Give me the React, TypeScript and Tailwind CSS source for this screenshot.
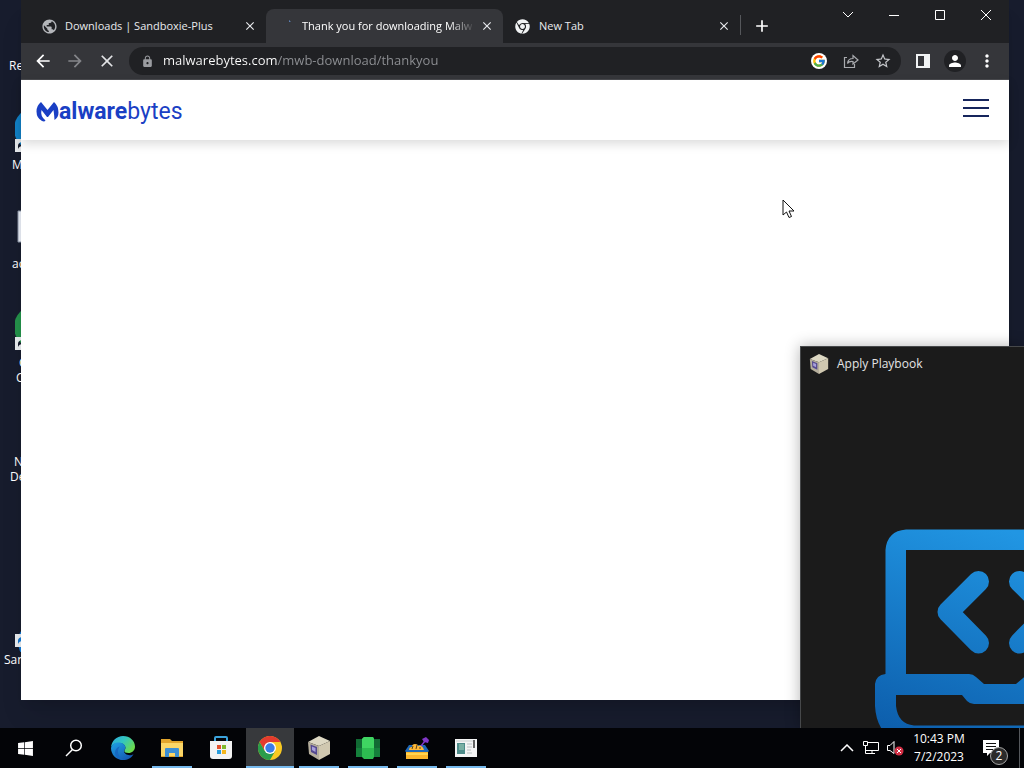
import type { ReactNode } from "react";
import { FaChrome, FaWindows } from "react-icons/fa";
import { FcGoogle } from "react-icons/fc";
import {
  MdAdd,
  MdArrowBack,
  MdArrowForward,
  MdClose,
  MdLock,
  MdMoreVert,
  MdPerson,
  MdPublic,
  MdStarBorder,
} from "react-icons/md";

function Shortcut() {
  return <path d="M0 30h13v13H0z M3 40v-3q0-4 5-4v-2l4 4-4 4v-2q-4 0-5 3z" fill="#e8ebee" fillRule="evenodd" />;
}

const desktopIcons: { id: string; lines: { text: string; inset: string }[]; art?: ReactNode }[] = [
  { id: "recycle", lines: [{ text: "Re", inset: "pl-[9px]" }] },
  {
    id: "edge",
    lines: [{ text: "M", inset: "pl-3" }],
    art: (
      <>
        <circle cx="21" cy="20" r="22" fill="#1283c9" />
        <Shortcut />
      </>
    ),
  },
  {
    id: "file",
    lines: [{ text: "ac", inset: "pl-3" }],
    art: <path d="M3 3h20v31H3z" fill="#e6eaf2" stroke="#8a93a5" />,
  },
  {
    id: "chrome",
    lines: [
      { text: "G", inset: "pl-[19px]" },
      { text: "C", inset: "pl-4" },
    ],
    art: (
      <>
        <circle cx="21" cy="20" r="22" fill="#24914a" />
        <Shortcut />
      </>
    ),
  },
  {
    id: "folder",
    lines: [
      { text: "N", inset: "pl-3.5" },
      { text: "De", inset: "pl-2.5" },
    ],
  },
  { id: "blank", lines: [] },
  {
    id: "sandboxie",
    lines: [{ text: "San", inset: "pl-1" }],
    art: (
      <>
        <circle cx="25" cy="38" r="22" fill="#1278d4" />
        <Shortcut />
      </>
    ),
  },
];

function Cube({ size }: { size: number }) {
  return (
    <svg width={size} height={size} viewBox="0 0 24 24">
      <path d="M12 0 23 5 12 10 1 6z" fill="#ddd8c3" />
      <path d="M1 6 12 10V24L2 18z" fill="#b5ae9c" />
      <path d="M12 10 23 5V18L12 24z" fill="#d0c8b0" />
      <path d="M3.500 8.500 10 11v8l-6-3z" fill="#54498f" />
      <path d="M5 10.500 8.500 12v4L5 14z" fill="#a8a0dc" />
    </svg>
  );
}

function EdgeLogo() {
  return (
    <svg width="24" height="24" viewBox="0 0 24 24">
      <defs>
        <linearGradient id="edgeTop" x1="0" y1="0" x2="1" y2="0.600">
          <stop offset="0" stopColor="#2aa7e0" />
          <stop offset="0.500" stopColor="#33c6c0" />
          <stop offset="1" stopColor="#6cdb4c" />
        </linearGradient>
        <linearGradient id="edgeLow" x1="0" y1="0" x2="0.800" y2="1">
          <stop offset="0" stopColor="#1fa2e4" />
          <stop offset="1" stopColor="#1456b0" />
        </linearGradient>
      </defs>
      <path d="M0 11.500C.5 5 5.600 0 12 0c7 0 12 5 12 10.500 0 4-3 6.500-6.500 6.500-3 0-4.200-1-4.200-2 0-.8 1.100-1.200 1.100-3.200C14.400 9 11.500 7 8 7c-4.500 0-7 2-8 4.500z" fill="url(#edgeTop)" />
      <path d="M0 12C.8 8.500 3.500 6.500 7.500 6.500c4 0 6.900 2.200 6.900 5.200 0 2-1.300 2-1.300 3.600 0 2 2.500 3.900 5.400 3.900 1.800 0 3.300-.6 4-1C20.500 21.800 16.800 24 12 24 5 24 0 18.500 0 12z" fill="url(#edgeLow)" />
      <path d="M9 10.500c-1.500 1.500-2.300 3.600-2 6C7.500 20 10 23 14 23.800 7 24.500 4 20 4 16.500c0-3 2-5.200 5-6z" fill="#1669c2" />
    </svg>
  );
}

function ExplorerIcon() {
  return (
    <svg width="22" height="20" viewBox="0 0 22 20">
      <path d="M0 1h9l2 2h11v16H0z" fill="#e2a52c" />
      <path d="M0 5h22v13H0z" fill="#fbd667" />
      <path d="M4 19v-8q0-1 1-1h12q1 0 1 1v8h-4v-4H8v4z" fill="#3d8fd4" />
    </svg>
  );
}

function StoreIcon() {
  return (
    <svg width="24" height="24" viewBox="0 0 24 24">
      <path d="M6 6V2q0-1 1-1h10q1 0 1 1v4" fill="none" stroke="#3ba3dc" strokeWidth="2" />
      <path d="M1 5h22v15q0 3-3 3H4q-3 0-3-3z" fill="#f3f3f3" />
      <path d="M8 9h4v4H8z" fill="#e2512c" />
      <path d="M13 9h4v4h-4z" fill="#7fb92c" />
      <path d="M8 14h4v4H8z" fill="#2a9ddb" />
      <path d="M13 14h4v4h-4z" fill="#f4b61c" />
    </svg>
  );
}

function ChromeLogo() {
  return (
    <svg width="24" height="24" viewBox="0 0 24 24">
      <circle cx="12" cy="12" r="12" fill="#f9c922" />
      <path d="M1.600 6A12 12 0 0 1 22.400 6H12L6.800 15z" fill="#e33b2e" />
      <path d="M1.600 6A12 12 0 0 0 12 24l5.200-9H6.800z" fill="#2a9d4b" />
      <circle cx="12" cy="12" r="6" fill="#fff" />
      <circle cx="12" cy="12" r="4.700" fill="#3a7de8" />
    </svg>
  );
}

function GreenBoxIcon() {
  return (
    <svg width="24" height="24" viewBox="0 0 24 24">
      <path d="M0 3h7v18H0z M17 3h7v18h-7z" fill="#15803c" />
      <path d="M0 3h7v9H0z M17 3h7v9h-7z" fill="#116b34" />
      <path d="m6 3 2-2h9l1 2v18l-1 2H8l-2-2z" fill="#2dbb51" />
      <path d="M6 3l2-2h9l1 2v9H6z" fill="#3fd562" />
    </svg>
  );
}

function SandboxIcon() {
  return (
    <svg width="24" height="24" viewBox="0 0 24 24">
      <path d="m0 15 4-6h16l4 6-2 2H2z" fill="#1e68b8" />
      <path d="M4 14q0-3 3-3 0-3 3-3t3 2q4-2 6 4z" fill="#ffb938" />
      <path d="m7 13 1-3m3 3 1-4m3 4v-2" stroke="#57401f" />
      <path d="M1 16h22v7H1z" fill="#fbb62c" />
      <path d="M1 17h22v2H1z" fill="#ffd450" />
      <path d="m16 10 4-5" stroke="#8137c8" strokeWidth="1.500" />
      <path d="m17 3 2-1 2-1 3 3-1 3-4-1z" fill="#8137c8" />
    </svg>
  );
}

function PanelIcon() {
  return (
    <svg width="22" height="20" viewBox="0 0 22 20">
      <path d="M0 1h22v18H0z" fill="#f4f5f5" />
      <path d="M2 5h8v11H2z" fill="#4e8c8a" />
      <path d="M4 6h5v6H4z" fill="#7ab0a4" />
      <path d="M12 6h5m-5 3h5m-5 3h4m-4 3h5" stroke="#b9c0c2" />
      <path d="M19 2v8" stroke="#333" strokeWidth="1.500" />
      <path d="M1 3h17" stroke="#c9cfcf" />
    </svg>
  );
}

function SearchIcon() {
  return (
    <svg width="18" height="18" viewBox="0 0 18 18" fill="none" stroke="#fff" strokeWidth="1.500">
      <circle cx="11" cy="6.500" r="5.300" />
      <path d="M7.500 10.500 1 17" />
    </svg>
  );
}

const apps = [
  { name: "Start", icon: <FaWindows size={17} />, bar: "" },
  { name: "Search", icon: <SearchIcon />, bar: "" },
  { name: "Edge", icon: <EdgeLogo />, bar: "" },
  { name: "File Explorer", icon: <ExplorerIcon />, bar: "w-10" },
  { name: "Store", icon: <StoreIcon />, bar: "" },
  { name: "Chrome", icon: <ChromeLogo />, bar: "w-12", active: true },
  { name: "Playbook", icon: <Cube size={24} />, bar: "w-10" },
  { name: "Package", icon: <GreenBoxIcon />, bar: "w-10" },
  { name: "Sandbox", icon: <SandboxIcon />, bar: "w-10" },
  { name: "Setup", icon: <PanelIcon />, bar: "w-10" },
];

function Tab({ title, icon, active }: { title: string; icon: ReactNode; active?: boolean }) {
  return (
    <div className={`flex h-[34px] w-[237px] shrink items-center rounded-t-lg pr-1 pl-3 ${active ? "bg-[#35363a]" : ""}`}>
      <span className="flex w-6 shrink-0">{icon}</span>
      <button
        className={`min-w-0 flex-1 overflow-hidden text-left text-[11px] whitespace-nowrap ${
          active ? "mask-r-from-85% text-white" : "text-[#e8eaed]"
        }`}>
        {title}
      </button>
      <button aria-label={`Close ${title}`} className="flex w-6 shrink-0 justify-center text-[#e8eaed]">
        <MdClose size={14} />
      </button>
    </div>
  );
}

function WindowButtons() {
  const shapes = [
    { name: "Search tabs", d: "m1 3 5 5 5-5" },
    { name: "Minimize", d: "M1 6.500h10" },
    { name: "Maximize", d: "M1.500 1.500h9v9h-9z" },
    { name: "Close", d: "m1 1 10 10M11 1 1 11" },
  ];
  return (
    <div className="ml-auto flex">
      {shapes.map((s) => (
        <button key={s.name} aria-label={s.name} className="flex h-[30px] w-[46px] items-center justify-center">
          <svg width="12" height="12" viewBox="0 0 12 12" fill="none" stroke="#fff">
            <path d={s.d} />
          </svg>
        </button>
      ))}
    </div>
  );
}

function ToolButton({ label, children }: { label: string; children: ReactNode }) {
  return (
    <button aria-label={label} className="flex h-7 w-8 shrink-0 items-center justify-center">
      {children}
    </button>
  );
}

function Browser() {
  return (
    <section className="absolute top-0 right-[15px] bottom-7 left-[21px] flex flex-col bg-white shadow-xl">
      <div className="flex h-[43px] bg-[#202124]">
        <div className="flex min-w-0 items-end pl-2">
          <Tab title="Downloads | Sandboxie-Plus" icon={<MdPublic size={17} color="#b4b6ba" />} />
          <Tab
            active
            title="Thank you for downloading Malw"
            icon={
              <svg width="16" height="16" viewBox="0 0 16 16">
                <path d="M11 2.500q1 .5 1 1.500" stroke="#6d9fe8" fill="none" />
              </svg>
            }
          />
          <Tab title="New Tab" icon={<FaChrome size={15} color="#f1f3f4" />} />
          <span className="mb-2 h-5 w-px bg-[#55575b]" />
          <button aria-label="New tab" className="ml-[11px] flex h-[34px] items-center text-white">
            <MdAdd size={20} />
          </button>
        </div>
        <WindowButtons />
      </div>

      <div className="flex h-[37px] items-center border-b border-[#4a4b4f] bg-[#35363a] px-1.5 text-white">
        <ToolButton label="Back">
          <MdArrowBack size={20} />
        </ToolButton>
        <ToolButton label="Forward">
          <MdArrowForward size={20} color="#85868a" />
        </ToolButton>
        <ToolButton label="Stop">
          <MdClose size={20} color="#e3e4e6" />
        </ToolButton>
        <div className="mx-1.5 flex h-7 min-w-0 flex-1 items-center rounded-full bg-[#202124] pr-0.5 pl-3">
          <MdLock size={13} color="#9a9ca0" className="shrink-0" />
          <input
            aria-label="Address"
            defaultValue="malwarebytes.com/mwb-download/thankyou"
            className="ml-[9px] min-w-0 flex-1 bg-linear-to-r from-white from-[114px] to-[#8f9195] to-[114px] bg-clip-text text-[13px] text-transparent outline-none"
          />
          <ToolButton label="Search with Google">
            <span className="rounded-full bg-white p-px">
              <FcGoogle size={14} />
            </span>
          </ToolButton>
          <ToolButton label="Share">
            <svg width="16" height="16" viewBox="0 0 16 16" fill="none" stroke="#a9abaf" strokeWidth="1.200">
              <path d="M4 4.500H1.500v10h10V11" />
              <path d="M4.500 10.500q.5-5 5.500-5V2.500L15 7l-5 4V8.500q-4-.5-5.500 2z" />
            </svg>
          </ToolButton>
          <ToolButton label="Bookmark">
            <MdStarBorder size={18} color="#c4c6ca" />
          </ToolButton>
        </div>
        <ToolButton label="Side panel">
          <svg width="14" height="14" viewBox="0 0 14 14">
            <path d="M0 0h14v14H0z M2 2v10h6V2z" fill="#f1f3f4" fillRule="evenodd" />
          </svg>
        </ToolButton>
        <ToolButton label="Profile">
          <span className="rounded-full bg-[#202124] p-0.5">
            <MdPerson size={18} />
          </span>
        </ToolButton>
        <ToolButton label="Menu">
          <MdMoreVert size={20} />
        </ToolButton>
      </div>

      <header className="flex h-[60px] shrink-0 items-center justify-between pr-5 pl-[15px] shadow-[0_4px_10px_rgba(0,0,0,0.14)]">
        <a href="#home" aria-label="Malwarebytes" className="flex items-center pt-1 text-[23px] leading-7 text-[#1a3fc4] [font-family:Roboto,sans-serif]">
          <svg width="23" height="20" viewBox="0 0 22 20" className="shrink-0">
            <path d="M4.500 0 11 8 17.500 0Q22 4 22 10.500 22 15.500 18 18q-.3-5.500-1-10L11.500 15h-1L5 8Q3.500 14 9 18.500 8 20 5.500 19 0 16 0 9.500 0 3.500 4.500 0z" fill="#1a3fc4" />
          </svg>
          <strong className="font-bold">alware</strong>
          bytes
        </a>
        <button aria-label="Open menu" className="mb-1 flex w-[26px] flex-col gap-1.5">
          <span className="h-0.5 bg-[#16255c]" />
          <span className="h-0.5 bg-[#16255c]" />
          <span className="h-0.5 bg-[#16255c]" />
        </button>
      </header>
    </section>
  );
}

function PlaybookWindow() {
  return (
    <section className="absolute top-[346px] right-0 bottom-0 left-[800px] flex flex-col overflow-hidden border-t border-l border-[#46484a] bg-[#1b1b1b] shadow-[0_0_14px_rgba(0,0,0,0.3)]">
      <div className="flex h-[34px] shrink-0 items-center gap-2 pl-2">
        <Cube size={20} />
        <h2 className="text-xs text-[#e4e4e4]">Apply Playbook</h2>
      </div>
      <svg width="150" height="200" viewBox="874 528 150 200" className="mt-auto ml-[73px] shrink-0">
        <defs>
          <linearGradient id="laptop" gradientUnits="userSpaceOnUse" x1="1000" y1="528" x2="930" y2="740">
            <stop offset="0" stopColor="#2196e3" />
            <stop offset="1" stopColor="#0d5fad" />
          </linearGradient>
        </defs>
        <path
          d="M885.500 674V550Q887 531 906 529.500H1030V550H906V674H969Q973 674 976 677L984 684H1016L1030 672V704H974Q970 704 967 701L962 695H896V706Q898 724 914 725.500H1030V746H914Q877 742 875 706V684Q876 675 885.500 674z"
          fill="url(#laptop)"
        />
        <path
          d="M978.500 581.500 948 612l30.500 31M1019.500 581.500 1050 612l-30.500 31"
          fill="none"
          stroke="url(#laptop)"
          strokeWidth="21"
          strokeLinecap="round"
          strokeLinejoin="round"
        />
      </svg>
    </section>
  );
}

function Taskbar() {
  return (
    <footer className="flex h-10 shrink-0 bg-[#030407] text-white">
      <nav className="flex gap-px pl-px">
        {apps.map((app) => (
          <button
            key={app.name}
            aria-label={app.name}
            className={`flex h-10 w-12 flex-col items-center ${app.active ? "bg-[#37393c]" : ""}`}>
            <span className="flex flex-1 items-center pt-0.5">{app.icon}</span>
            <span className={`h-0.5 bg-[#76b9ed] ${app.bar}`} />
          </button>
        ))}
      </nav>
      <div className="ml-auto flex items-center">
        <button aria-label="Hidden icons" className="flex w-6 justify-center">
          <svg width="14" height="8" viewBox="0 0 14 8" fill="none" stroke="#fff" strokeWidth="1.500">
            <path d="m1 7 6-6 6 6" />
          </svg>
        </button>
        <button aria-label="Network" className="flex w-6 justify-center">
          <svg width="18" height="16" viewBox="0 0 18 16" fill="none" stroke="#fff">
            <path d="M6 2.500h10.500v8h-13v-4M10 10.500v3M6 13.500h7M1.500 1.500h4v4h-4zM3.500 5.500v8H6" />
          </svg>
        </button>
        <button aria-label="Volume muted" className="flex w-6 justify-center">
          <svg width="18" height="16" viewBox="0 0 18 16" fill="none" stroke="#fff">
            <path d="M1.500 5.500H4l4-4v12l-4-3H1.500z" />
            <circle cx="13" cy="11" r="4.500" fill="#d32f45" stroke="none" />
            <path d="m11 9 4 4m0-4-4 4" />
          </svg>
        </button>
        <button className="w-16 text-center text-xs leading-[18px]">
          10:43 PM
          <br />
          7/2/2023
        </button>
        <button aria-label="2 notifications" className="flex w-12 justify-center pr-2">
          <span className="relative">
            <svg width="18" height="18" viewBox="0 0 18 18">
              <path d="M1 1h16v13H8l-3 3v-3H1z" fill="#fff" />
              <path d="M4 4.500h10M4 7.500h10M4 10.500h7" stroke="#111" />
            </svg>
            <span className="absolute top-2 left-2 flex size-[18px] items-center justify-center rounded-full border border-[#a3a3a3] bg-[#2b2b2b] text-xs">
              2
            </span>
          </span>
        </button>
        <span className="h-10 w-[5px] border-l border-[#55585c]" />
      </div>
    </footer>
  );
}

export default function App() {
  return (
    <main className="flex min-h-screen flex-col overflow-hidden bg-[#171c2d] [font-family:'Open_Sans','Noto_Sans',sans-serif]">
      <div className="relative flex-1 overflow-hidden">
        <div className="grid w-[74px] auto-rows-[99px] text-xs leading-[15px] text-white">
          {desktopIcons.map((item) => (
            <div key={item.id} className="pt-2.5">
              <svg width="43" height="48" viewBox="0 0 43 48" className="ml-[15px]">
                {item.art}
              </svg>
              {item.lines.map((line) => (
                <p key={line.text} className={line.inset}>
                  {line.text}
                </p>
              ))}
            </div>
          ))}
        </div>
        <Browser />
        <PlaybookWindow />
        <svg width="13" height="20" viewBox="0 0 13 20" className="absolute top-[199px] left-[782px]">
          <path d="M1 1v15l3.500-3 2.500 5.500 2.500-1L7 12h5z" fill="#fff" stroke="#111" />
        </svg>
      </div>
      <Taskbar />
    </main>
  );
}
